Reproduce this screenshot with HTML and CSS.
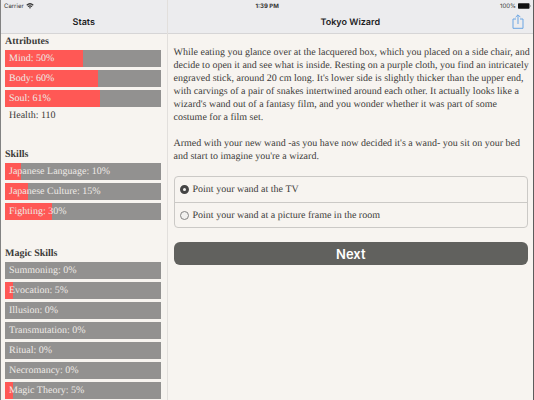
FILE: index.html
```html
<!DOCTYPE html>
<html lang="en">
<head>
    <meta charset="UTF-8">
    <meta name="viewport" content="width=device-width, initial-scale=1.0">
    <title>Tokyo Wizard</title>
    <link rel="stylesheet" href="styles.css">
</head>
<body>
    <div class="app">

        <aside class="sidebar">
            <header class="topBar">
                <div class="status">
                    <span>Carrier</span>
                    <svg class="wifi" viewBox="0 0 16 12" aria-hidden="true">
                        <path d="M1.5 4.5C5.3 1 10.7 1 14.5 4.5M4 7.3C6.4 5.2 9.6 5.2 12 7.3" fill="none" stroke="currentColor" stroke-width="2.4"/>
                        <path d="M5.8 9.2Q8 7.4 10.2 9.2L8 11.6Z" fill="currentColor"/>
                    </svg>
                </div>
                <h1>Stats</h1>
            </header>

            <section class="stats">
                <h2>Attributes</h2>
                <ul>
                    <li class="bar"><div class="fill" style="width:50%"></div><span>Mind: 50%</span></li>
                    <li class="bar"><div class="fill" style="width:60%"></div><span>Body: 60%</span></li>
                    <li class="bar"><div class="fill" style="width:61%"></div><span>Soul: 61%</span></li>
                    <li class="plain">Health: 110</li>
                </ul>
            </section>
            <section class="stats">
                <h2>Skills</h2>
                <ul>
                    <li class="bar"><div class="fill" style="width:10%"></div><span>Japanese Language: 10%</span></li>
                    <li class="bar"><div class="fill" style="width:15%"></div><span>Japanese Culture: 15%</span></li>
                    <li class="bar"><div class="fill" style="width:30%"></div><span>Fighting: 30%</span></li>
                </ul>
            </section>
            <section class="stats">
                <h2>Magic Skills</h2>
                <ul>
                    <li class="bar"><span>Summoning: 0%</span></li>
                    <li class="bar"><div class="fill" style="width:5%"></div><span>Evocation: 5%</span></li>
                    <li class="bar"><span>Illusion: 0%</span></li>
                    <li class="bar"><span>Transmutation: 0%</span></li>
                    <li class="bar"><span>Ritual: 0%</span></li>
                    <li class="bar"><span>Necromancy: 0%</span></li>
                    <li class="bar"><div class="fill" style="width:5%"></div><span>Magic Theory: 5%</span></li>
                </ul>
            </section>
        </aside>

        <main class="story">
            <header class="topBar">
                <div class="status">
                    <b class="clock">1:39 PM</b>
                    <span class="charge">100%</span>
                    <svg class="battery" viewBox="0 0 26 12" aria-hidden="true">
                        <rect x="0" y="0.5" width="23" height="11" rx="1.5"/>
                        <path d="M24 4q2 2 0 4z"/>
                    </svg>
                </div>
                <h1>Tokyo Wizard</h1>
                <button class="share" aria-label="Share">
                    <svg viewBox="0 0 12 15" aria-hidden="true">
                        <path d="M4 5H1V14.3H11V5H8M6 10V1M3.6 3.2L6 0.8L8.4 3.2"/>
                    </svg>
                </button>
            </header>

            <div class="page">
                <p>While eating you glance over at the lacquered box, which you placed on a side chair, and<br>
                decide to open it and see what is inside. Resting on a purple cloth, you find an intricately<br>
                engraved stick, around 20 cm long. It's lower side is slightly thicker than the upper end,<br>
                with carvings of a pair of snakes intertwined around each other. It actually looks like a<br>
                wizard's wand out of a fantasy film, and you wonder whether it was part of some<br>
                costume for a film set.</p>
                <p>Armed with your new wand -as you have now decided it's a wand- you sit on your bed<br>
                and start to imagine you're a wizard.</p>

                <form>
                    <div class="choices">
                        <label><input type="radio" name="choice" checked> Point your wand at the TV</label>
                        <label><input type="radio" name="choice"> Point your wand at a picture frame in the room</label>
                    </div>
                    <button type="button" class="next">Next</button>
                </form>
            </div>
        </main>

    </div>
</body>
</html>
```
FILE: styles.css
```css
* {
    box-sizing: border-box;
}
body {
    margin: 0;
    background-color: #f7f4f0;
    color: #3c3b39;
    font-family: "Palatino", "Palatino Linotype", "Liberation Serif", serif;
    font-size: 10px;
    text-rendering: geometricPrecision;
}
.app {
    display: flex;
    height: 100vh;
    overflow: hidden;
    border-left: 1px solid #828282;
    border-right: 1px solid #5c5c5c;
}
.sidebar {
    flex: 0 0 31.3%;
    border-right: 1px solid #e2dfdc;
}
.story {
    flex: 1;
    min-width: 0;
}

/* top bars */
.topBar {
    position: relative;
    height: 34px;
    background-color: #ececee;
    border-bottom: 1px solid #d6d5d6;
    color: #1c1c1e;
    font-family: "Inter", "Liberation Sans", sans-serif;
    text-align: center;
}
.status {
    display: flex;
    align-items: center;
    height: 12px;
    padding: 0 2px 0 3px;
    font-size: 6px;
    color: #333333;
}
.wifi {
    width: 8px;
    height: 6px;
    margin-left: 2px;
}
.clock {
    margin-left: 85px;
}
.charge {
    margin-left: auto;
}
.battery {
    width: 13px;
    height: 6px;
    margin-left: 2px;
    fill: #111111;
}
.topBar h1 {
    margin: 0;
    font-size: 9px;
    font-weight: 600;
    line-height: 22px;
}
.share {
    position: absolute;
    right: 9px;
    top: 14px;
    padding: 0;
    border: 0;
    background: none;
}
.share svg {
    display: block;
    width: 12px;
    height: 15px;
    fill: none;
    stroke: #6ba5e3;
    stroke-width: 1;
}

/* stats */
.stats {
    padding: 0 6px 0 4px;
    margin-bottom: 26px;
}
.stats h2 {
    margin: 0;
    font-size: 10px;
    line-height: 16px;
}
.stats ul {
    display: grid;
    gap: 3px;
    margin: 0;
    padding: 0;
    list-style: none;
}
.stats li {
    padding-left: 4px;
}
.stats .bar {
    position: relative;
    line-height: 17px;
    background-color: #929190;
    color: #eeeae6;
}
.stats .plain {
    line-height: 11px;
}
.bar span {
    position: relative;
}
.fill {
    position: absolute;
    left: 0;
    top: 0;
    height: 100%;
    background-color: #ff5855;
}

/* story */
.page {
    padding: 12px 5px 0 6px;
}
.page p {
    margin: 0 0 13px;
    line-height: 13px;
    white-space: nowrap;
}
.choices {
    border: 1px solid #cbc9c6;
    border-radius: 4px;
}
.choices label {
    display: flex;
    align-items: center;
    gap: 4px;
    height: 25px;
    padding-left: 5px;
}
.choices label + label {
    border-top: 1px solid #cbc9c6;
}
.choices input {
    appearance: none;
    width: 9px;
    height: 9px;
    margin: 0;
    border: 1px solid #858585;
    border-radius: 50%;
    background-color: #f2f1ef;
}
.choices input:checked {
    border: 3px solid #454545;
}
.next {
    display: block;
    width: 100%;
    height: 23px;
    margin-top: 14px;
    padding: 0;
    border: 0;
    border-radius: 6px;
    background-color: #61615e;
    color: #ffffff;
    font-family: "Inter", "Liberation Sans", sans-serif;
    font-size: 13px;
    font-weight: 600;
}
```
